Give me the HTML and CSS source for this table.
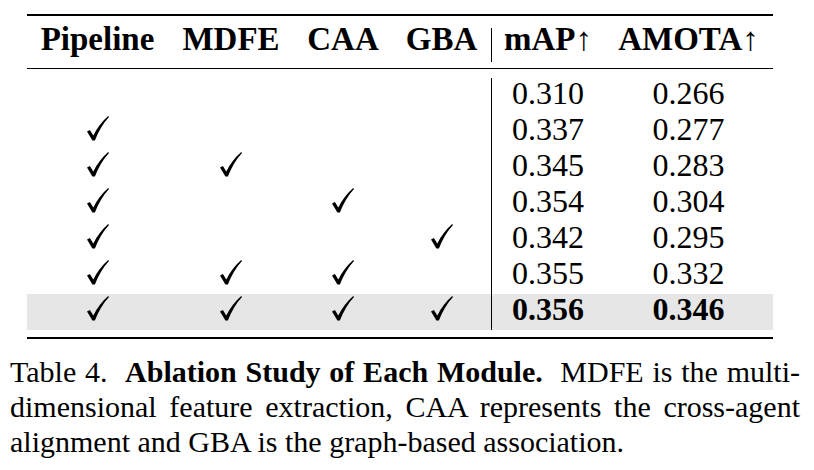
FILE: index.html
```html
<!DOCTYPE html>
<html>
<head>
<meta charset="utf-8">
<link rel="stylesheet" href="styles.css">
</head>
<body>
<div class="page">
  <div class="table">
    <div class="rule rule-top"></div>
    <div class="row head">
      <div class="c c1">Pipeline</div>
      <div class="c c2">MDFE</div>
      <div class="c c3">CAA</div>
      <div class="c c4">GBA</div>
      <div class="c c5 bar">mAP<span class="arr">↑</span></div>
      <div class="c c6">AMOTA<span class="arr">↑</span></div>
    </div>
    <div class="rule rule-mid"></div>
    <div class="body">
      <div class="row">
        <div class="c c1"></div><div class="c c2"></div><div class="c c3"></div><div class="c c4"></div>
        <div class="c c5 bar">0.310</div><div class="c c6">0.266</div>
      </div>
      <div class="row">
        <div class="c c1"><svg class="ck" viewBox="0 0 22 25"><path d="M0 15.6 L2.9 14 L6.3 19.4 C10 12.2 15 5.2 21.2 0 L22 0.9 C16.2 7.2 11.3 15.2 7.9 24.6 L5.4 24.6 Z"/></svg></div>
        <div class="c c2"></div><div class="c c3"></div><div class="c c4"></div>
        <div class="c c5 bar">0.337</div><div class="c c6">0.277</div>
      </div>
      <div class="row">
        <div class="c c1"><svg class="ck" viewBox="0 0 22 25"><path d="M0 15.6 L2.9 14 L6.3 19.4 C10 12.2 15 5.2 21.2 0 L22 0.9 C16.2 7.2 11.3 15.2 7.9 24.6 L5.4 24.6 Z"/></svg></div>
        <div class="c c2"><svg class="ck" viewBox="0 0 22 25"><path d="M0 15.6 L2.9 14 L6.3 19.4 C10 12.2 15 5.2 21.2 0 L22 0.9 C16.2 7.2 11.3 15.2 7.9 24.6 L5.4 24.6 Z"/></svg></div>
        <div class="c c3"></div><div class="c c4"></div>
        <div class="c c5 bar">0.345</div><div class="c c6">0.283</div>
      </div>
      <div class="row">
        <div class="c c1"><svg class="ck" viewBox="0 0 22 25"><path d="M0 15.6 L2.9 14 L6.3 19.4 C10 12.2 15 5.2 21.2 0 L22 0.9 C16.2 7.2 11.3 15.2 7.9 24.6 L5.4 24.6 Z"/></svg></div>
        <div class="c c2"></div>
        <div class="c c3"><svg class="ck" viewBox="0 0 22 25"><path d="M0 15.6 L2.9 14 L6.3 19.4 C10 12.2 15 5.2 21.2 0 L22 0.9 C16.2 7.2 11.3 15.2 7.9 24.6 L5.4 24.6 Z"/></svg></div>
        <div class="c c4"></div>
        <div class="c c5 bar">0.354</div><div class="c c6">0.304</div>
      </div>
      <div class="row">
        <div class="c c1"><svg class="ck" viewBox="0 0 22 25"><path d="M0 15.6 L2.9 14 L6.3 19.4 C10 12.2 15 5.2 21.2 0 L22 0.9 C16.2 7.2 11.3 15.2 7.9 24.6 L5.4 24.6 Z"/></svg></div>
        <div class="c c2"></div><div class="c c3"></div>
        <div class="c c4"><svg class="ck" viewBox="0 0 22 25"><path d="M0 15.6 L2.9 14 L6.3 19.4 C10 12.2 15 5.2 21.2 0 L22 0.9 C16.2 7.2 11.3 15.2 7.9 24.6 L5.4 24.6 Z"/></svg></div>
        <div class="c c5 bar">0.342</div><div class="c c6">0.295</div>
      </div>
      <div class="row">
        <div class="c c1"><svg class="ck" viewBox="0 0 22 25"><path d="M0 15.6 L2.9 14 L6.3 19.4 C10 12.2 15 5.2 21.2 0 L22 0.9 C16.2 7.2 11.3 15.2 7.9 24.6 L5.4 24.6 Z"/></svg></div>
        <div class="c c2"><svg class="ck" viewBox="0 0 22 25"><path d="M0 15.6 L2.9 14 L6.3 19.4 C10 12.2 15 5.2 21.2 0 L22 0.9 C16.2 7.2 11.3 15.2 7.9 24.6 L5.4 24.6 Z"/></svg></div>
        <div class="c c3"><svg class="ck" viewBox="0 0 22 25"><path d="M0 15.6 L2.9 14 L6.3 19.4 C10 12.2 15 5.2 21.2 0 L22 0.9 C16.2 7.2 11.3 15.2 7.9 24.6 L5.4 24.6 Z"/></svg></div>
        <div class="c c4"></div>
        <div class="c c5 bar">0.355</div><div class="c c6">0.332</div>
      </div>
      <div class="row hl">
        <div class="c c1"><svg class="ck" viewBox="0 0 22 25"><path d="M0 15.6 L2.9 14 L6.3 19.4 C10 12.2 15 5.2 21.2 0 L22 0.9 C16.2 7.2 11.3 15.2 7.9 24.6 L5.4 24.6 Z"/></svg></div>
        <div class="c c2"><svg class="ck" viewBox="0 0 22 25"><path d="M0 15.6 L2.9 14 L6.3 19.4 C10 12.2 15 5.2 21.2 0 L22 0.9 C16.2 7.2 11.3 15.2 7.9 24.6 L5.4 24.6 Z"/></svg></div>
        <div class="c c3"><svg class="ck" viewBox="0 0 22 25"><path d="M0 15.6 L2.9 14 L6.3 19.4 C10 12.2 15 5.2 21.2 0 L22 0.9 C16.2 7.2 11.3 15.2 7.9 24.6 L5.4 24.6 Z"/></svg></div>
        <div class="c c4"><svg class="ck" viewBox="0 0 22 25"><path d="M0 15.6 L2.9 14 L6.3 19.4 C10 12.2 15 5.2 21.2 0 L22 0.9 C16.2 7.2 11.3 15.2 7.9 24.6 L5.4 24.6 Z"/></svg></div>
        <div class="c c5 bar b">0.356</div><div class="c c6 b">0.346</div>
      </div>
    </div>
    <div class="rule rule-bot"></div>
  </div>
  <div class="caption">
    <div class="line">Table 4.&nbsp; <b>Ablation Study of Each Module.</b>&nbsp; MDFE is the multi-</div>
    <div class="line">dimensional feature extraction, CAA represents the cross-agent</div>
    <div class="line last">alignment and GBA is the graph-based association.</div>
  </div>
</div>
</body>
</html>
```

FILE: styles.css
```css
html, body {
  margin: 0;
  padding: 0;
  background: #ffffff;
}
.page, .table, .row, .c, .caption, .line {
  font-family: "Liberation Serif", "Times New Roman", serif;
  color: #000;
}
.page {
  width: 814px;
  height: 470px;
  overflow: hidden;
}
.table {
  margin-left: 27px;
  width: 746px;
  padding-top: 14px;
}
.rule { background: #000; }
.rule-top { height: 2px; }
.rule-mid { height: 1px; margin-top: 6px; }
.rule-bot { height: 2px; margin-top: 7px; }

.row {
  display: grid;
  grid-template-columns: 141px 126px 98px 99px 113px 169px;
}
.head {
  margin-top: 12px;
  height: 34px;
  font-weight: bold;
  font-size: 33px;
  line-height: 22px;
}
.head .c { height: 34px; }
.body { margin-top: 9px; }
.body .row {
  height: 36px;
  font-size: 32px;
  line-height: 30px;
}
.body .c { height: 36px; }
.c {
  text-align: center;
  box-sizing: border-box;
}
.bar { border-left: 1px solid #000; }
.arr { font-weight: normal; }
.b { font-weight: bold; }
.hl { background: #e6e6e6; }
.ck {
  display: block;
  width: 22px;
  height: 25px;
  margin: 2px auto 0;
  fill: #000;
}
.caption {
  margin-top: 15px;
  margin-left: 10px;
  width: 790px;
  font-size: 30px;
  line-height: 35px;
}
.line {
  text-align: justify;
  text-align-last: justify;
  white-space: nowrap;
}
.line.last {
  text-align: left;
  text-align-last: left;
}
```
